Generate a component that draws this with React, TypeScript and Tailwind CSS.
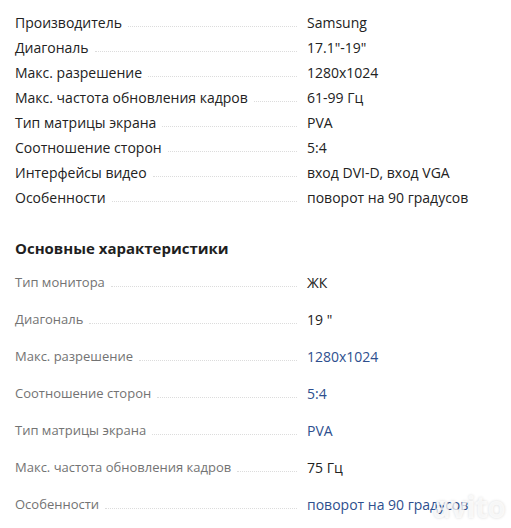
const mainSpecs = [
  { label: 'Производитель', value: 'Samsung' },
  { label: 'Диагональ', value: '17.1"-19"' },
  { label: 'Макс. разрешение', value: '1280x1024' },
  { label: 'Макс. частота обновления кадров', value: '61-99 Гц' },
  { label: 'Тип матрицы экрана', value: 'PVA' },
  { label: 'Соотношение сторон', value: '5:4' },
  { label: 'Интерфейсы видео', value: 'вход DVI-D, вход VGA' },
  { label: 'Особенности', value: 'поворот на 90 градусов' },
];

const basicSpecs = [
  { label: 'Тип монитора', value: 'ЖК', link: false },
  { label: 'Диагональ', value: '19 "', link: false },
  { label: 'Макс. разрешение', value: '1280x1024', link: true },
  { label: 'Соотношение сторон', value: '5:4', link: true },
  { label: 'Тип матрицы экрана', value: 'PVA', link: true },
  { label: 'Макс. частота обновления кадров', value: '75 Гц', link: false },
  { label: 'Особенности', value: 'поворот на 90 градусов', link: true },
];

function Leader() {
  return <span className="flex-1 mx-[6px] mb-[6px] border-b border-dotted border-[#dcdcdc]" />;
}

export default function App() {
  return (
    <div className="relative w-[511px] h-[528px] overflow-hidden bg-white font-['Open_Sans',sans-serif] text-[14px] text-[#222]">
      <div className="pl-[15px] pr-[10px] pt-[12px]">
        {mainSpecs.map((s) => (
          <div key={s.label} className="flex items-end leading-[21px] pb-[4px]">
            <div className="flex w-[292px] items-end pr-[4px]">
              <span className="whitespace-nowrap">{s.label}</span>
              <Leader />
            </div>
            <span className="whitespace-nowrap">{s.value}</span>
          </div>
        ))}

        <h2 className="mt-[25px] mb-[4px] text-[15px] font-bold text-[#1f1f1f]">Основные характеристики</h2>

        {basicSpecs.map((s) => (
          <div key={s.label} className="flex items-end leading-[21px] pt-[8px] pb-[8px]">
            <div className="flex w-[292px] items-end pr-[4px]">
              <span className="whitespace-nowrap text-[13px] text-[#737373]">{s.label}</span>
              <Leader />
            </div>
            <span className={s.link ? 'whitespace-nowrap text-[#2e4f8e]' : 'whitespace-nowrap text-[#222]'}>{s.value}</span>
          </div>
        ))}
      </div>

      <div className="absolute right-[6px] bottom-[6px] text-[30px] font-bold leading-none tracking-tight text-white/75 [text-shadow:0_0_3px_rgba(0,0,0,0.15)] select-none">
        avito
      </div>
    </div>
  );
}
